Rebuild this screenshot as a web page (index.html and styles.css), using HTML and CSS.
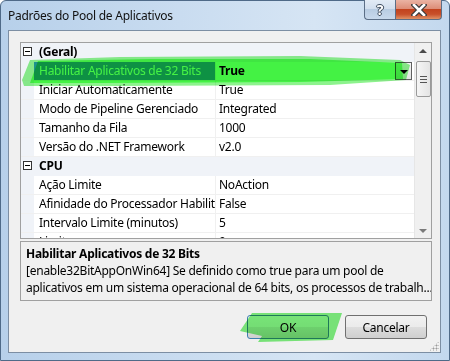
FILE: index.html
```html
<!DOCTYPE html>
<html lang="pt">
<head>
    <meta charset="UTF-8">
    <title>Padrões do Pool de Aplicativos</title>
    <link rel="stylesheet" href="styles.css">
</head>
<body>
<div class="window">
    <div class="titlebar">
        <span class="caption">Padrões do Pool de Aplicativos</span>
        <div class="caption-buttons">
            <div class="cap-btn help">?</div>
            <div class="cap-btn close">
                <svg width="16" height="12" viewBox="0 0 16 12">
                    <path d="M3 1 L13 11 M13 1 L3 11" stroke="#3b3b3b" stroke-width="5" stroke-linecap="square"/>
                    <path d="M3 1 L13 11 M13 1 L3 11" stroke="#fff" stroke-width="2.6" stroke-linecap="square"/>
                </svg>
            </div>
        </div>
    </div>

    <div class="client">
        <div class="propgrid">
            <div class="rows">
                <div class="row category">
                    <span class="toggle"></span>
                    <span class="cat-name">(Geral)</span>
                </div>
                <div class="row selected">
                    <span class="margin"></span>
                    <span class="name">Habilitar Aplicativos de 32 Bits</span>
                    <span class="value bold">True<span class="dropdown"></span></span>
                </div>
                <div class="row">
                    <span class="margin"></span>
                    <span class="name">Iniciar Automaticamente</span>
                    <span class="value">True</span>
                </div>
                <div class="row">
                    <span class="margin"></span>
                    <span class="name">Modo de Pipeline Gerenciado</span>
                    <span class="value">Integrated</span>
                </div>
                <div class="row">
                    <span class="margin"></span>
                    <span class="name">Tamanho da Fila</span>
                    <span class="value">1000</span>
                </div>
                <div class="row">
                    <span class="margin"></span>
                    <span class="name">Versão do .NET Framework</span>
                    <span class="value">v2.0</span>
                </div>
                <div class="row category">
                    <span class="toggle"></span>
                    <span class="cat-name">CPU</span>
                </div>
                <div class="row">
                    <span class="margin"></span>
                    <span class="name">Ação Limite</span>
                    <span class="value">NoAction</span>
                </div>
                <div class="row">
                    <span class="margin"></span>
                    <span class="name">Afinidade do Processador Habilitada</span>
                    <span class="value">False</span>
                </div>
                <div class="row">
                    <span class="margin"></span>
                    <span class="name">Intervalo Limite (minutos)</span>
                    <span class="value">5</span>
                </div>
                <div class="row">
                    <span class="margin"></span>
                    <span class="name">Limite</span>
                    <span class="value">0</span>
                </div>
            </div>
            <div class="scrollbar">
                <div class="arrow up"></div>
                <div class="track">
                    <div class="thumb"><span class="grip"></span></div>
                </div>
                <div class="arrow down"></div>
            </div>
        </div>

        <div class="description">
            <div class="desc-title">Habilitar Aplicativos de 32 Bits</div>
            <div class="desc-line">[enable32BitAppOnWin64] Se definido como true para um pool de</div>
            <div class="desc-line">aplicativos em um sistema operacional de 64 bits, os processos de trabalh...</div>
        </div>

        <div class="buttons">
            <button class="btn default">OK</button>
            <button class="btn">Cancelar</button>
        </div>
        <div class="sizegrip"></div>
    </div>

    <!-- marker strokes drawn over the screenshot -->
    <svg class="marker" width="450" height="361" viewBox="0 0 450 361">
        <path d="M30 60 L120 57 L300 56 L400 60 L410 65 L406 80 L330 85 L120 86 L24 86 L22 80 Z" fill="#8df38d"/>
        <path d="M38 61 L150 59 L310 59 L402 63 L403 79 L300 82 L100 83 L30 83 Z" fill="#44f244"/>
        <path d="M252 313 L342 313 L333 340 L258 342 L262 336 L240 331 Z" fill="#7ef07e"/>
    </svg>
</div>
</body>
</html>
```

FILE: styles.css
```css
/* Reset */
* {
  box-sizing: border-box;
  margin: 0;
  padding: 0;
}

body {
  font-family: 'Noto Sans', 'Open Sans', sans-serif;
  font-size: 12px;
  letter-spacing: -0.25px;
  color: #000;
  background: #fff;
  width: 450px;
  height: 361px;
  overflow: hidden;
}

/* Window frame */
.window {
  position: relative;
  width: 450px;
  height: 361px;
  padding: 0 8px 7px 7px;
  display: flex;
  flex-direction: column;
  background: linear-gradient(90deg, #b7d0ea 0%, #c9dcf0 40%, #d6e5f4 70%, #c3d8ee 100%);
  border: 1px solid #4f6a88;
  border-radius: 6px 6px 0 0;
}

/* Title bar */
.titlebar {
  height: 29px;
  display: flex;
  justify-content: space-between;
  align-items: flex-start;
}

.caption {
  margin-top: 6px;
  font-size: 12px;
  color: #111;
}

.caption-buttons {
  display: flex;
  margin-top: -1px;
  margin-right: -1px;
}

.cap-btn {
  height: 20px;
  border: 1px solid #5b6e86;
  border-top: none;
  display: flex;
  align-items: center;
  justify-content: center;
}

.cap-btn.help {
  width: 31px;
  border-radius: 0 0 0 4px;
  border-right: none;
  background: linear-gradient(#e2ebf5 0%, #d2dfee 45%, #b8cce2 50%, #c8d9ec 100%);
  color: #fff;
  font-weight: bold;
  font-size: 14px;
  text-shadow: 1px 0 0 #3d4c5e, -1px 0 0 #3d4c5e, 0 1px 0 #3d4c5e, 0 -1px 0 #3d4c5e;
}

.cap-btn.close {
  width: 47px;
  border-radius: 0 0 4px 0;
  background: linear-gradient(#eab3a3 0%, #dd8e78 45%, #c2431e 50%, #c8502a 75%, #e09266 100%);
}

/* Client area */
.client {
  position: relative;
  flex: 1;
  background: #f0f0f0;
  border: 1px solid #7c8ea3;
  padding: 11px 10px 0 11px;
}

/* Property grid */
.propgrid {
  display: flex;
  width: 412px;
  height: 197px;
  border: 1px solid #a0a0a0;
  background: #fff;
  overflow: hidden;
}

.rows {
  width: 393px;
  display: flex;
  flex-direction: column;
}

.row {
  height: 19px;
  flex-shrink: 0;
  display: grid;
  grid-template-columns: 13px 182px 1fr;
  border-bottom: 1px solid #f0f0f0;
  line-height: 18px;
}

.row .margin {
  background: #f0f3f8;
}

.row .name {
  padding-left: 5px;
  border-right: 1px solid #f0f0f0;
  white-space: nowrap;
  overflow: hidden;
}

.row .value {
  padding-left: 3px;
  display: flex;
  justify-content: space-between;
  white-space: nowrap;
}

.value.bold {
  font-weight: bold;
}

.row.category {
  background: #f0f3f8;
  grid-template-columns: 13px 1fr;
  border-bottom: 1px solid #f0f3f8;
}

.cat-name {
  padding-left: 5px;
  font-weight: bold;
}

.toggle {
  width: 9px;
  height: 9px;
  margin: 4px 0 0 2px;
  border: 1px solid #333;
  background: #fff;
  position: relative;
}

.toggle::after {
  content: "";
  position: absolute;
  left: 1px;
  top: 3px;
  width: 5px;
  height: 1px;
  background: #000;
}

.row.selected .name {
  background: #3399ff;
  color: #fff;
}

.dropdown {
  width: 17px;
  height: 18px;
  margin-right: 2px;
  border: 1px solid #606060;
  background: linear-gradient(#f4f4f4, #e2e2e2);
  position: relative;
}

.dropdown::after {
  content: "";
  position: absolute;
  left: 4px;
  top: 7px;
  border-left: 4px solid transparent;
  border-right: 4px solid transparent;
  border-top: 4px solid #000;
}

/* Scrollbar */
.scrollbar {
  width: 17px;
  display: flex;
  flex-direction: column;
  background: #f0f0f0;
  border-left: 1px solid #e6e6e6;
}

.arrow {
  height: 17px;
  position: relative;
}

.arrow::after {
  content: "";
  position: absolute;
  left: 4px;
  border-left: 4px solid transparent;
  border-right: 4px solid transparent;
}

.arrow.up::after {
  top: 6px;
  border-bottom: 4px solid #4a4a4a;
}

.arrow.down::after {
  top: 8px;
  border-top: 4px solid #7a7a7a;
}

.track {
  flex: 1;
}

.thumb {
  height: 36px;
  margin: 1px 0 0 1px;
  width: 15px;
  border: 1px solid #9a9a9a;
  border-radius: 2px;
  background: linear-gradient(90deg, #f5f5f5, #e4e4e4);
  display: flex;
  align-items: center;
  justify-content: center;
}

.grip {
  width: 7px;
  height: 7px;
  border-top: 1px solid #555;
  border-bottom: 1px solid #555;
  position: relative;
}

.grip::after {
  content: "";
  position: absolute;
  left: 0;
  right: 0;
  top: 2px;
  height: 1px;
  background: #555;
}

/* Description pane */
.description {
  width: 412px;
  height: 60px;
  margin-top: 2px;
  border: 1px solid #a0a0a0;
  padding: 3px 5px;
  line-height: 17px;
  white-space: nowrap;
  overflow: hidden;
}

.desc-title {
  font-weight: bold;
}

/* Buttons */
.buttons {
  display: flex;
  justify-content: flex-end;
  gap: 16px;
  margin-top: 14px;
  padding-right: 3px;
}

.btn {
  width: 82px;
  height: 24px;
  font-family: inherit;
  font-size: 12px;
  letter-spacing: inherit;
  color: #000;
  border: 1px solid #707070;
  border-radius: 3px;
  background: linear-gradient(#f2f2f2 0%, #ebebeb 50%, #dddddd 51%, #cfcfcf 100%);
}

.btn.default {
  border-color: #3c7fb1;
}

.sizegrip {
  position: absolute;
  right: 1px;
  bottom: 1px;
  width: 10px;
  height: 10px;
  background: radial-gradient(circle, #9a9a9a 0.8px, transparent 1.2px) 0 0 / 3px 3px;
  clip-path: polygon(100% 0, 100% 100%, 0 100%);
}

/* Marker overlay */
.marker {
  position: absolute;
  left: -1px;
  top: -1px;
  pointer-events: none;
  mix-blend-mode: multiply;
}
```
